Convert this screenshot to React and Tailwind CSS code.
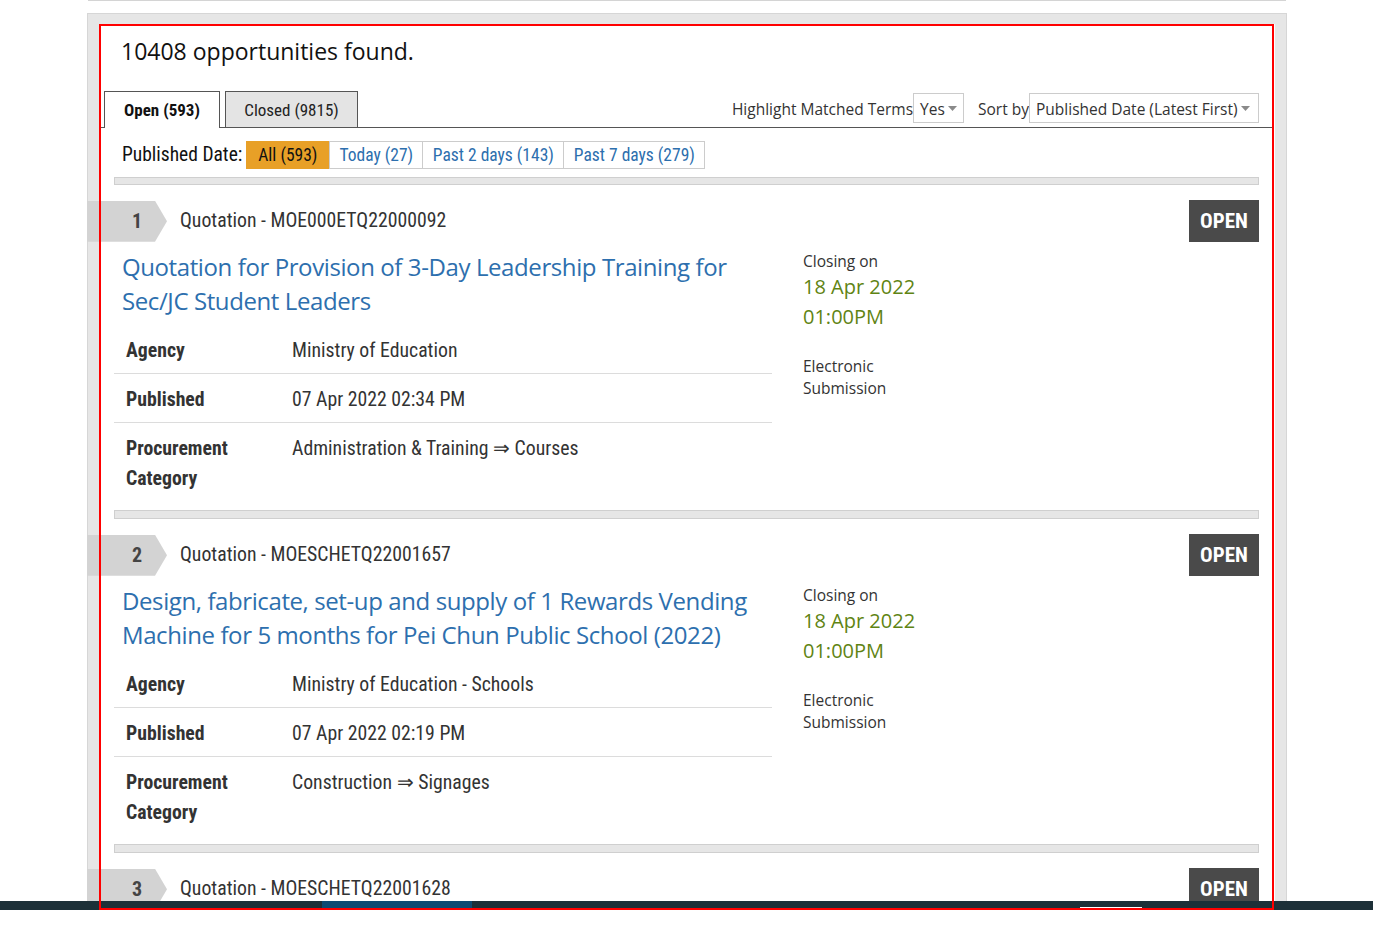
import React from "react";

const cond = "font-['Roboto_Condensed','Roboto',sans-serif] [font-stretch:75%]";
const open = "font-['Open_Sans',sans-serif]";

function Caret() {
  return (
    <svg width="9" height="6" viewBox="0 0 9 6" className="ml-[3px] mt-[-2px]">
      <path d="M0 0 H9 L4.5 5 Z" fill="#8a8a8a" />
    </svg>
  );
}

function Row({ label, value, last }) {
  return (
    <div className={`flex pt-[11px] pb-[7px] leading-[30px] text-[19.75px] text-[#333] ${cond} ${last ? "" : "border-b border-[#dcdcdc]"}`}>
      <div className="w-[178px] pl-[12px] font-bold">{label}</div>
      <div className="flex-1">{value}</div>
    </div>
  );
}

function Item({ n, code, title, agency, published, category }) {
  return (
    <div>
      <div className="flex items-center justify-between ml-[-27px] h-[42px]">
        <div className="flex items-center">
          <div className="w-[80px] h-[41px] bg-[#d3d3d3] [clip-path:polygon(0_0,68px_0,80px_50%,68px_100%,0_100%)] flex items-center">
            <span className={`${cond} font-bold text-[20px] text-[#444] pl-[45px]`}>{n}</span>
          </div>
          <span className={`${cond} text-[19.75px] text-[#333] ml-[13px]`}>{code}</span>
        </div>
        <div className={`w-[70px] h-[42px] bg-[#4a4a4a] text-white flex items-center justify-center ${cond} font-bold text-[21px]`}>OPEN</div>
      </div>
      <div className="flex mt-[8px]">
        <div className="w-[658px]">
          <div className={`pl-[8px] pr-[20px] text-[24px] leading-[34px] tracking-[-0.4px] text-[#2d6fae] ${open}`}>{title}</div>
          <div className="mt-[7px]">
            <Row label="Agency" value={agency} />
            <Row label="Published" value={published} />
            <Row label={<>Procurement<br />Category</>} value={category} last />
          </div>
        </div>
        <div className={`ml-[31px] ${open} text-[#333]`}>
          <div className="text-[15.5px] leading-[22px]">Closing on</div>
          <div className="text-[20px] leading-[30px] text-[#5f8413]">18 Apr 2022</div>
          <div className="text-[20px] leading-[30px] text-[#5f8413]">01:00PM</div>
          <div className="text-[15.5px] leading-[22px] mt-[23px]">Electronic<br />Submission</div>
        </div>
      </div>
      <div className="mt-[9px] h-[9px] bg-[#e6e6e6] border border-[#cfcfcf]" />
      <div className="h-[15px]" />
    </div>
  );
}

export default function App() {
  return (
    <div className="w-[1373px] h-[935px] bg-white overflow-hidden">
      <div className="relative h-[910px] overflow-hidden">
        <div className="ml-[88px] w-[1198px] h-px bg-[#d4d4d4]" />
        <div className="ml-[87px] mt-[12px] w-[1200px] bg-[#e6e6e6] border-t border-l border-r border-[#d6d6d6] pt-[10px] px-[11px] h-[900px]">
          <div className="bg-white h-full">
            <div className={`${open} text-[23px] leading-[30px] text-[#111] pt-[12px] pl-[22px]`}>10408 opportunities found.</div>
            <div className="mt-[25px] mx-[2px] border-b border-[#555] flex items-end justify-between pl-[3px]">
              <div className="flex items-end">
                <div className={`w-[116px] h-[37px] -mb-px pt-[2px] bg-white border border-b-0 border-[#555] flex items-center justify-center ${cond} font-bold text-[17px] text-[#111]`}>Open (593)</div>
                <div className={`ml-[5px] w-[133px] h-[36px] pt-[2px] bg-[#e4e4e4] border border-b-0 border-[#555] flex items-center justify-center ${cond} text-[17px] text-[#222]`}>Closed (9815)</div>
              </div>
              <div className={`flex items-center mb-[4px] mr-[14px] ${open} text-[15.5px] text-[#333]`}>
                <span className="pt-[4px]">Highlight Matched Terms</span>
                <div className="h-[30px] w-[51px] border border-[#ccc] flex items-center pl-[6px] pt-[4px]">Yes<Caret /></div>
                <span className="ml-[14px] pt-[4px]">Sort by</span>
                <div className="h-[30px] w-[230px] border border-[#ccc] flex items-center pl-[6px] pt-[4px]">Published Date (Latest First)<Caret /></div>
              </div>
            </div>
            <div className="pl-[15px] pr-[16px]">
              <div className="flex items-center mt-[12px] pl-[8px]">
                <span className={`${cond} text-[19.5px] text-[#111] mr-[4px]`}>Published Date:</span>
                <div className={`flex ${cond} text-[17.5px]`}>
                  <div className="h-[28px] w-[83px] bg-[#e8a027] text-[#111] flex items-center justify-center">All (593)</div>
                  <div className="h-[28px] w-[94px] border border-[#ccc] text-[#2d6fae] flex items-center justify-center">Today (27)</div>
                  <div className="h-[28px] w-[141px] border border-l-0 border-[#ccc] text-[#2d6fae] flex items-center justify-center">Past 2 days (143)</div>
                  <div className="h-[28px] w-[141px] border border-l-0 border-[#ccc] text-[#2d6fae] flex items-center justify-center">Past 7 days (279)</div>
                </div>
              </div>
              <div className="mt-[8px] h-[8px] bg-[#e6e6e6] border border-[#cfcfcf]" />
              <div className="h-[15px]" />
              <Item
                n="1"
                code="Quotation - MOE000ETQ22000092"
                title="Quotation for Provision of 3-Day Leadership Training for Sec/JC Student Leaders"
                agency="Ministry of Education"
                published="07 Apr 2022 02:34 PM"
                category="Administration & Training ⇒ Courses"
              />
              <Item
                n="2"
                code="Quotation - MOESCHETQ22001657"
                title="Design, fabricate, set-up and supply of 1 Rewards Vending Machine for 5 months for Pei Chun Public School (2022)"
                agency="Ministry of Education - Schools"
                published="07 Apr 2022 02:19 PM"
                category="Construction ⇒ Signages"
              />
              <Item
                n="3"
                code="Quotation - MOESCHETQ22001628"
                title="Quotation"
                agency="Ministry of Education - Schools"
                published="07 Apr 2022"
                category="Construction"
              />
            </div>
          </div>
        </div>
        <div className="absolute left-0 bottom-0 w-full h-[9px] bg-[#1d3038]">
          <div className="absolute left-[322px] top-0 w-[150px] h-full bg-[#0e4a72]" />
          <div className="absolute left-[1080px] bottom-0 w-[62px] h-[3px] bg-white" />
        </div>
        <div className="absolute left-[99px] top-[24px] w-[1175px] h-[886px] border-2 border-[#ff0000] pointer-events-none" />
      </div>
    </div>
  );
}
